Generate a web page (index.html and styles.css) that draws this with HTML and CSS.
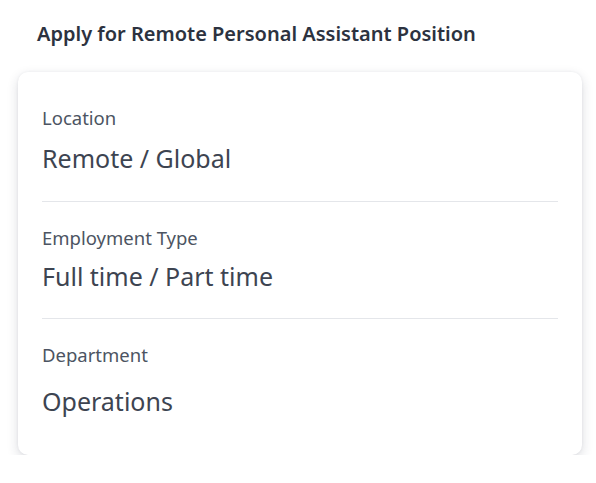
FILE: index.html
```html
<!DOCTYPE html>
<html lang="en">
<head>
<meta charset="utf-8">
<title>Apply for Remote Personal Assistant Position</title>
<link rel="stylesheet" href="styles.css">
</head>
<body>
  <main class="page">
    <h1 class="page-title">Apply for Remote Personal Assistant Position</h1>
    <section class="details-card">
      <div class="detail">
        <div class="detail-label">Location</div>
        <div class="detail-value">Remote / Global</div>
      </div>
      <div class="detail">
        <div class="detail-label">Employment Type</div>
        <div class="detail-value detail-value--tight">Full time / Part time</div>
      </div>
      <div class="detail detail--last">
        <div class="detail-label">Department</div>
        <div class="detail-value detail-value--spaced">Operations</div>
      </div>
    </section>
  </main>
</body>
</html>
```

FILE: styles.css
```css
* {
  box-sizing: border-box;
}

html, body {
  margin: 0;
  padding: 0;
  background: #ffffff;
}

body {
  font-family: "Noto Sans", "Open Sans", sans-serif;
  color: #343b48;
}

.page {
  padding: 22px 14px 0 18px;
}

.page-title {
  margin: 0 0 26px 19px;
  font-size: 20px;
  line-height: 24px;
  font-weight: 600;
  color: #2c3240;
}

.details-card {
  background: #ffffff;
  border-radius: 10px;
  box-shadow: 0 4px 12px rgba(30, 40, 60, 0.16), 0 0 3px rgba(30, 40, 60, 0.06);
  padding: 10px 24px 10px;
}

.detail {
  padding: 24px 0 26px;
  border-bottom: 1px solid #e4e6ea;
}

.detail:first-child {
  padding-bottom: 27px;
}

.detail--last {
  border-bottom: none;
  padding-bottom: 28px;
}

.detail-label {
  font-size: 18.5px;
  line-height: 24px;
  color: #4c5462;
}

.detail-value {
  margin-top: 12px;
  font-size: 25px;
  line-height: 32px;
  color: #3d4451;
}

.detail-value--tight {
  margin-top: 10px;
}

.detail-value--spaced {
  margin-top: 18px;
}
```
